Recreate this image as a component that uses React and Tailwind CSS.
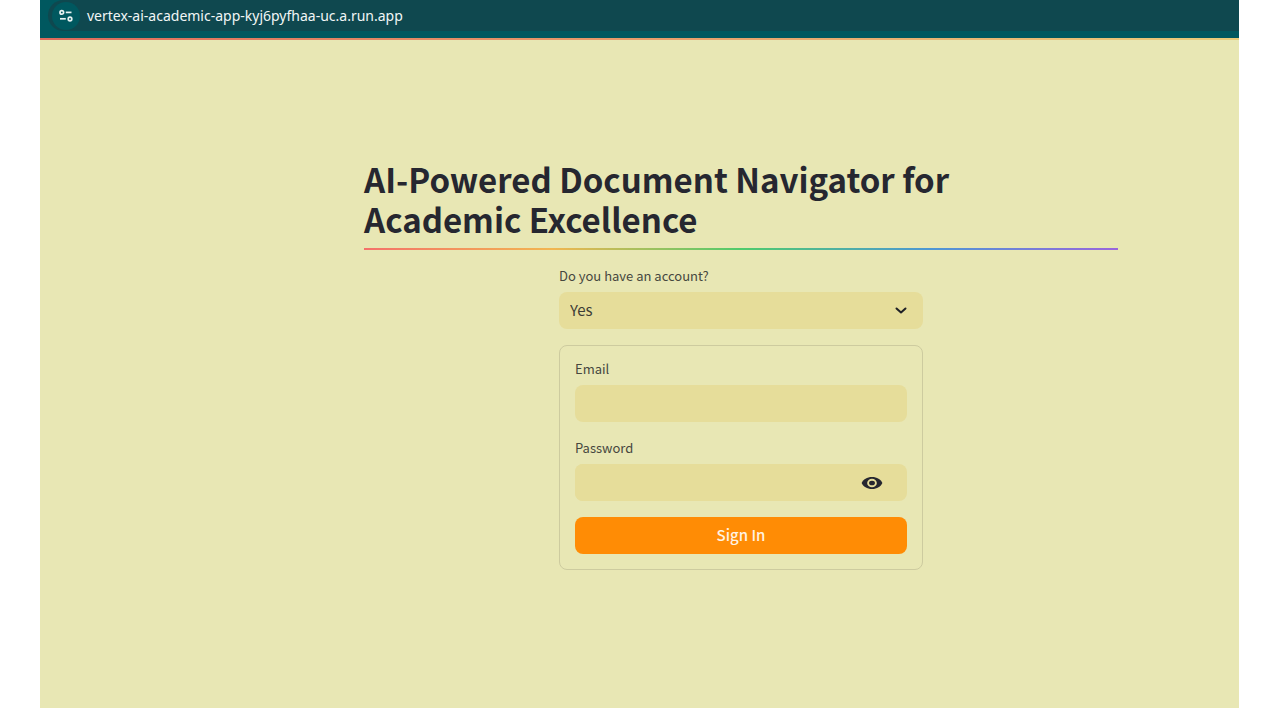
import { useState } from "react";

function SiteSettingsIcon() {
  return (
    <svg className="size-4" viewBox="0 0 16 16" fill="none" stroke="#e6f1f1" strokeWidth="1.7" aria-hidden="true">
      <circle cx="3.8" cy="4.4" r="1.8" />
      <path d="M7.800 4.400H13.500" />
      <path d="M2 10.800H7.800" />
      <circle cx="12" cy="11" r="1.8" />
    </svg>
  );
}

function ChevronIcon() {
  return (
    <svg className="h-2 w-3" viewBox="0 0 12 8" fill="none" stroke="#1f2026" strokeWidth="2" strokeLinecap="round" strokeLinejoin="round" aria-hidden="true">
      <path d="M1.5 1.5L6 5.5L10.5 1.5" />
    </svg>
  );
}

function EyeIcon() {
  return (
    <svg className="h-3 w-[22px]" viewBox="0 0 22 12" aria-hidden="true">
      <path d="M11 0C6 0 2.2 2.5 .6 6C2.2 9.5 6 12 11 12S19.8 9.5 21.4 6C19.8 2.5 16 0 11 0Z" fill="#262730" />
      <ellipse cx="11" cy="6" rx="3.9" ry="3.3" fill="none" stroke="#e6dd9a" strokeWidth="1.9" />
    </svg>
  );
}

const fieldClass = "h-[37px] w-full rounded-lg bg-[#e6dd9a] px-[11px] text-[15px] text-[#3c3c36] outline-none";
const labelClass = "mb-2 block text-[13px] leading-4 text-[#46473f]";

export default function App() {
  const [account, setAccount] = useState("Yes");

  return (
    <div className="flex min-h-screen flex-col bg-white pr-[41px] pb-3 pl-10 font-['Noto_Sans_CJK_SC',sans-serif]">
      <header className="bg-[#00585f] pb-[7px] pl-2">
        <div className="flex h-[31px] items-center gap-[7px] rounded-l-full bg-[#0f484f] pl-1">
          <button type="button" aria-label="View site information" className="flex size-7 items-center justify-center rounded-full bg-[#00585f]">
            <SiteSettingsIcon />
          </button>
          <span className="font-['Noto_Sans',sans-serif] text-[14px] leading-5 text-[#f1f6f6]">
            vertex-ai-academic-app-kyj6pyfhaa-uc.a.run.app
          </span>
        </div>
      </header>
      <div className="h-[2px] bg-linear-to-r from-[#dd6a5b] to-[#e8cc7a]" />

      <main className="flex-1 bg-[#e8e7b4] pt-[119px] pr-[121px] pl-[324px]">
        <h1 className="text-[33px] leading-10 font-bold text-[#262730]">
          AI-Powered Document Navigator for
          <br />
          Academic Excellence
        </h1>
        <div className="mt-[9px] h-[2px] bg-[linear-gradient(to_right,#f4716a,#f2b650_25%,#4fcb6c_50%,#4d98d4_75%,#9a66dc)]" />

        <div className="mx-[195px] mt-[18px]">
          <label htmlFor="account" className={labelClass}>Do you have an account?</label>
          <div className="relative">
            <select
              id="account"
              value={account}
              onChange={(e) => setAccount(e.target.value)}
              className={`${fieldClass} appearance-none`}
            >
              <option>Yes</option>
              <option>No</option>
            </select>
            <span className="pointer-events-none absolute inset-y-0 right-4 flex items-center">
              <ChevronIcon />
            </span>
          </div>

          <form onSubmit={(e) => e.preventDefault()} className="mt-4 rounded-lg border border-[#cdcb9f] p-[15px]">
            <label htmlFor="email" className={labelClass}>Email</label>
            <input id="email" type="email" className={fieldClass} />

            <label htmlFor="password" className={`${labelClass} mt-[18px]`}>Password</label>
            <div className="flex items-center rounded-lg bg-[#e6dd9a] pr-6">
              <input id="password" type="password" className={`${fieldClass} min-w-0 flex-1`} />
              <button type="button" aria-label="Show password">
                <EyeIcon />
              </button>
            </div>

            <button type="submit" className="mt-4 h-[37px] w-full rounded-lg bg-[#ff8c05] text-[15px] font-medium text-[#fff3e2]">
              Sign In
            </button>
          </form>
        </div>
      </main>
    </div>
  );
}
